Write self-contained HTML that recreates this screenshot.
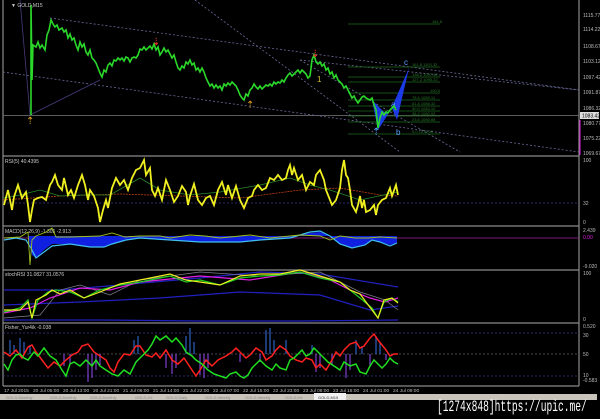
<!DOCTYPE html>
<html><head><meta charset="utf-8">
<style>
html,body{margin:0;padding:0;background:#000;width:600px;height:419px;overflow:hidden;font-family:"Liberation Sans",sans-serif}
svg{position:absolute;left:0;top:0}
.wm{position:absolute;left:437px;top:398px;color:#fff;font-family:"Liberation Mono",monospace;font-size:16px;white-space:nowrap;transform:scaleX(0.6);transform-origin:0 0}
</style></head><body>
<svg width="600" height="419" viewBox="0 0 600 419">
<rect width="600" height="419" fill="#000"/>
<g stroke="#8a8a8a" stroke-width="1.2" fill="none">
<line x1="3" y1="0" x2="3" y2="386"/>
<line x1="579" y1="0" x2="579" y2="386"/>
<line x1="3" y1="156" x2="579" y2="156"/>
<line x1="3" y1="226" x2="579" y2="226"/>
<line x1="3" y1="270" x2="579" y2="270"/>
<line x1="3" y1="323" x2="579" y2="323"/>
<line x1="3" y1="386" x2="579" y2="386"/>
</g>
<line x1="3" y1="115.5" x2="579" y2="115.5" stroke="#7a7a7a" stroke-width="0.8"/>
<g stroke="#6a6a9a" stroke-width="0.8" stroke-dasharray="2,2" fill="none">
<line x1="50" y1="18" x2="579" y2="90"/>
<line x1="3" y1="72" x2="579" y2="152"/>
<line x1="195" y1="0" x2="400" y2="152"/>
<line x1="300" y1="60" x2="460" y2="152"/>
<line x1="300" y1="60" x2="579" y2="90"/>
<line x1="30" y1="115" x2="100" y2="80" stroke-dasharray="none" stroke="#4a3a7a"/>
<line x1="20" y1="0" x2="30" y2="115" stroke-dasharray="none" stroke="#4a3a7a"/>
</g>
<g stroke="#1f6a1f" stroke-width="0.8">
<line x1="348" y1="24" x2="440" y2="24"/>
<line x1="348" y1="67" x2="440" y2="67"/>
<line x1="348" y1="77" x2="440" y2="77"/>
<line x1="348" y1="82" x2="440" y2="82"/>
<line x1="348" y1="93" x2="440" y2="93"/>
<line x1="348" y1="100" x2="440" y2="100"/>
<line x1="348" y1="106" x2="440" y2="106"/>
<line x1="348" y1="111" x2="440" y2="111"/>
<line x1="348" y1="116" x2="440" y2="116"/>
<line x1="348" y1="122" x2="440" y2="122"/>
<line x1="348" y1="134" x2="440" y2="134"/>
</g>
<g fill="#2a7a2a" font-size="4">
<text x="432" y="23">161.8</text>
<text x="412" y="66">161.8 1103.32</text>
<text x="412" y="76">138.2 1097.42</text>
<text x="412" y="81">127.2 1095.22</text>
<text x="430" y="92">100.0</text>
<text x="412" y="99">78.6 1089.11</text>
<text x="412" y="105">61.8 1086.32</text>
<text x="412" y="110">50.0 1084.10</text>
<text x="412" y="115">38.2 1082.92</text>
<text x="412" y="121">23.6 1080.88</text>
<text x="412" y="133">0.0 1075.30</text>
</g>
<polygon points="372,100 378,130 392,108 397,120 409,68 395,100 390,112 384,112" fill="#1f3fff" opacity="0.9"/>
<g fill="#5aa0ff" font-size="8"><text x="404" y="65">c</text><text x="391" y="107">a</text><text x="396" y="135">b</text></g>
<text x="317" y="82" fill="#d8c030" font-size="8">1</text>
<polyline fill="none" stroke="#2ad82a" stroke-width="1.6" points="31,115 31,5 32,80 33,45 36,47 38,42 40,48 42,45 45,50 47,35 49,30 51,20 53,24 55,27 57,25 59,30 62,28 64,32 66,30 68,38 70,34 72,40 74,38 76,45 78,50 80,42 82,47 84,44 86,52 88,55 90,50 92,58 94,60 96,63 98,68 100,73 102,77 104,70 106,72 108,65 110,63 112,66 114,60 116,61 118,58 120,60 122,58 124,61 126,57 128,58 130,62 132,58 134,57 136,58 138,55 140,49 142,50 144,47 146,50 148,48 150,46 152,49 154,44 156,50 158,47 160,55 162,52 164,48 166,52 168,50 170,54 172,58 174,55 176,62 178,68 180,70 182,66 184,68 186,62 188,64 190,60 192,65 194,63 196,70 198,68 200,72 202,68 204,72 206,78 208,82 210,86 212,84 214,88 216,85 218,88 220,86 222,90 224,84 226,86 228,83 230,85 232,82 234,84 236,86 238,90 240,95 242,98 244,100 246,94 248,96 250,90 252,88 254,84 256,87 258,89 260,86 262,89 264,87 266,85 268,86 270,84 272,86 274,82 276,84 278,82 280,83 282,80 284,82 286,78 288,75 290,73 292,76 294,74 296,72 298,70 300,73 302,70 304,72 306,74 308,78 310,76 312,60 314,55 316,62 318,64 320,62 322,66 324,64 326,70 328,68 330,74 332,72 334,78 336,75 338,80 340,82 342,84 344,88 346,86 348,90 350,94 352,98 354,96 356,100 358,103 360,100 362,97 364,96 366,98 368,99 370,100 372,98 374,105 376,110 378,128 380,118 382,112 384,115 386,112 388,113 390,110 392,108 394,106 396,110"/>
<g fill="#e0a020" font-size="10"><text x="26" y="124">⇡</text><text x="246" y="108">⇡</text><text x="372" y="135" fill="#5aa0ff">⇡</text></g>
<g fill="#ff3030" font-size="10"><text x="152" y="45">⇣</text><text x="311" y="57">⇣</text></g>
<g fill="#ccc" font-size="5"><text x="11" y="7">▼ GOLD,M15</text></g>
<g fill="#bbb" font-size="5">
<text x="583" y="17">1115.77</text><text x="583" y="31">1114.22</text><text x="583" y="48">1108.67</text>
<text x="583" y="63">1103.12</text><text x="583" y="79">1097.42</text><text x="583" y="94">1091.87</text>
<text x="583" y="110">1086.32</text><text x="583" y="125">1080.77</text><text x="583" y="140">1075.22</text><text x="583" y="155">1069.67</text>
</g>
<rect x="580" y="112" width="19" height="7" fill="#ddd"/><text x="582" y="117.5" font-size="5" fill="#000">1083.42</text>
<line x1="580" y1="120" x2="580" y2="155" stroke="#e020e0" stroke-width="1"/>
<line x1="3" y1="203" x2="579" y2="203" stroke="#3a3a8a" stroke-dasharray="2,2" stroke-width="0.8"/>
<text x="5" y="163" fill="#ccc" font-size="5">RSI(5) 40.4395</text>
<g fill="#bbb" font-size="5"><text x="583" y="162">100</text><text x="583" y="205">32</text><text x="583" y="224">0</text></g>
<polyline fill="none" stroke="#c04010" stroke-width="0.8" stroke-dasharray="2,1" points="3,200 60,196 120,194 180,196 240,198 300,190 340,188 380,195 398,196"/>
<polyline fill="none" stroke="#2a8a2a" stroke-width="0.8" points="3,198 20,195 40,190 60,196 80,195 110,195 140,178 160,190 190,195 220,192 260,185 290,178 310,185 330,190 360,200 398,192"/>
<polyline fill="none" stroke="#f0f020" stroke-width="1.8" points="4,205 8,190 12,210 14,197 18,185 22,198 26,192 28,205 30,222 32,210 34,200 38,198 42,197 46,200 50,185 52,182 55,175 58,185 62,190 64,178 68,195 71,190 74,198 78,185 82,175 85,185 88,200 90,190 94,196 98,208 100,222 103,210 106,200 108,208 112,188 116,178 120,185 124,180 128,190 132,178 136,170 140,168 144,160 146,175 150,168 152,190 155,196 158,188 162,200 166,180 170,190 174,202 178,196 182,186 186,192 188,205 190,196 194,184 198,200 202,205 206,198 210,196 214,205 218,190 222,182 226,195 228,185 232,198 236,186 240,200 244,208 248,198 252,196 254,190 258,185 262,190 266,188 270,178 274,180 278,175 282,180 286,178 288,170 290,165 292,175 294,168 298,180 302,175 306,190 310,182 314,185 316,175 320,170 324,180 326,190 330,200 332,205 336,200 340,188 342,170 344,160 346,175 348,178 350,190 352,205 356,212 358,205 360,196 362,208 364,200 366,212 370,210 374,205 376,215 378,205 382,200 386,198 390,188 392,196 396,185 398,195"/>
<text x="5" y="233" fill="#ccc" font-size="5">MACD(12,26,9) -1.305 -2.913</text>
<g fill="#bbb" font-size="5"><text x="583" y="232">2.439</text><text x="583" y="239" fill="#e020e0">0.00</text><text x="583" y="268">-9.020</text></g>
<line x1="3" y1="238" x2="579" y2="238" stroke="#a020a0" stroke-width="0.8"/>
<path fill="#1020e0" d="M4,236 L20,236 L28,236 L32,255 L36,258 L44,250 L52,244 L70,244 L90,247 L104,247 L112,244 L126,240 L140,238 L170,240 L200,242 L240,242 L260,240 L290,238 L310,233 L320,232 L330,236 L340,244 L352,248 L365,245 L372,240 L380,242 L390,245 L397,243 L397,236 Z"/>
<polyline fill="none" stroke="#40c0f0" stroke-width="1.2" points="4,240 16,238 26,240 32,250 36,258 44,252 52,246 70,244 90,247 104,247 112,244 126,240 140,238 170,240 200,242 240,242 260,240 290,238 310,232 320,231 330,236 340,244 352,248 365,245 372,240 380,242 390,246 397,243"/>
<polyline fill="none" stroke="#a0c020" stroke-width="0.9" points="4,238 20,237 28,232 30,265 32,240 36,236 46,232 52,228 56,237 70,237 100,236 112,233 125,237 140,236 160,236 170,238 190,235 205,236 220,238 250,235 270,238 300,235 320,236 330,240 340,236 355,238 368,238 380,237 397,238"/>
<text x="5" y="276" fill="#ccc" font-size="5">stochRSI 31.0827 31.0576</text>
<g fill="#bbb" font-size="5"><text x="583" y="275">100</text><text x="583" y="321">0</text></g>
<polyline fill="none" stroke="#2020c0" stroke-width="1.2" points="4,290 60,290 120,285 200,278 260,272 320,274 398,287"/>
<polyline fill="none" stroke="#2020c0" stroke-width="1.2" points="4,305 80,302 160,298 240,292 320,295 370,310 398,306"/>
<polyline fill="none" stroke="#2020c0" stroke-width="1.2" points="4,320 100,320 200,321 300,321 398,320"/>
<polyline fill="none" stroke="#808090" stroke-width="0.7" points="4,318 40,315 60,290 80,285 110,295 140,280 200,272 260,276 320,272 360,292 385,300 398,310"/>
<polyline fill="none" stroke="#e020e0" stroke-width="1.2" points="4,313 30,308 50,298 80,288 110,290 140,282 200,276 250,280 300,272 330,280 350,290 370,298 385,302 398,298"/>
<polyline fill="none" stroke="#20d020" stroke-width="1.2" points="4,312 20,308 28,300 32,318 38,300 48,292 56,290 70,292 84,298 100,290 120,285 140,282 170,276 186,282 200,280 220,285 240,278 260,276 280,275 300,272 320,278 340,282 360,298 372,308 378,318 384,302 392,298 398,302"/>
<polyline fill="none" stroke="#f0f020" stroke-width="1.2" points="4,310 20,310 28,302 32,318 36,300 46,295 52,290 60,294 70,290 84,298 100,292 120,284 140,280 170,274 186,280 200,282 220,285 240,276 260,274 280,274 300,270 320,276 340,282 350,290 360,294 372,310 378,318 384,300 392,298 398,303"/>
<text x="5" y="329" fill="#ccc" font-size="5">Fisher_Yur4ik -0.038</text>
<g fill="#bbb" font-size="5"><text x="583" y="328">0.520</text><text x="583" y="337">30</text><text x="583" y="356">50</text><text x="583" y="377">10</text><text x="583" y="382">-0.583</text></g>
<g stroke="#3a3a8a" stroke-dasharray="2,2" stroke-width="0.7"><line x1="3" y1="333" x2="579" y2="333"/><line x1="3" y1="376" x2="579" y2="376"/></g>
<line x1="3" y1="354" x2="579" y2="354" stroke="#606060" stroke-dasharray="2,2" stroke-width="0.7"/>
<g stroke="#3060c0" stroke-width="1.2">
<line x1="10" y1="354" x2="10" y2="340"/><line x1="14" y1="354" x2="14" y2="345"/><line x1="20" y1="354" x2="20" y2="338"/><line x1="24" y1="354" x2="24" y2="342"/><line x1="30" y1="354" x2="30" y2="345"/>
<line x1="134" y1="354" x2="134" y2="340"/><line x1="138" y1="354" x2="138" y2="336"/><line x1="186" y1="354" x2="186" y2="336"/><line x1="190" y1="354" x2="190" y2="328"/><line x1="194" y1="354" x2="194" y2="342"/>
<line x1="266" y1="354" x2="266" y2="330"/><line x1="270" y1="354" x2="270" y2="328"/><line x1="274" y1="354" x2="274" y2="340"/><line x1="286" y1="354" x2="286" y2="340"/>
<line x1="312" y1="354" x2="312" y2="345"/><line x1="356" y1="354" x2="356" y2="340"/><line x1="362" y1="354" x2="362" y2="346"/><line x1="376" y1="354" x2="376" y2="336"/><line x1="380" y1="354" x2="380" y2="343"/>
</g>
<g stroke="#8040d0" stroke-width="1.2">
<line x1="64" y1="354" x2="64" y2="366"/><line x1="70" y1="354" x2="70" y2="364"/><line x1="88" y1="354" x2="88" y2="382"/><line x1="92" y1="354" x2="92" y2="378"/><line x1="96" y1="354" x2="96" y2="370"/><line x1="100" y1="354" x2="100" y2="365"/>
<line x1="166" y1="354" x2="166" y2="368"/><line x1="172" y1="354" x2="172" y2="374"/><line x1="176" y1="354" x2="176" y2="368"/><line x1="200" y1="354" x2="200" y2="375"/><line x1="204" y1="354" x2="204" y2="378"/><line x1="208" y1="354" x2="208" y2="368"/>
<line x1="240" y1="354" x2="240" y2="362"/><line x1="260" y1="354" x2="260" y2="362"/><line x1="316" y1="354" x2="316" y2="372"/><line x1="320" y1="354" x2="320" y2="368"/><line x1="332" y1="354" x2="332" y2="365"/><line x1="346" y1="354" x2="346" y2="378"/><line x1="350" y1="354" x2="350" y2="370"/><line x1="370" y1="354" x2="370" y2="365"/><line x1="386" y1="354" x2="386" y2="360"/>
</g>
<polyline fill="none" stroke="#ff2020" stroke-width="1.5" points="4,352 10,356 16,350 22,358 28,347 32,345 36,352 42,360 48,368 54,362 60,366 66,360 72,355 78,352 82,346 88,344 94,352 100,356 106,360 110,368 114,372 118,362 124,354 130,355 136,346 140,346 146,355 152,357 156,353 160,358 166,350 172,360 178,364 184,358 190,367 196,376 200,370 206,360 212,366 218,360 226,356 232,352 236,348 240,352 246,358 250,355 256,348 262,352 266,360 272,356 276,350 280,346 286,350 290,356 296,360 302,362 306,358 312,360 316,368 320,364 326,370 332,360 336,352 340,356 344,350 350,344 356,342 360,348 364,346 370,338 374,334 378,340 382,345 386,350 390,356 394,354 398,354"/>
<polyline fill="none" stroke="#20e020" stroke-width="1.5" points="4,364 8,370 12,360 16,355 20,354 24,358 28,360 34,352 38,356 44,348 50,356 56,360 62,370 66,376 70,364 74,362 80,366 86,360 92,366 96,360 100,366 106,370 112,374 118,376 124,370 130,374 136,362 142,356 148,350 152,344 156,336 160,340 166,336 172,342 176,338 182,345 186,352 192,356 196,360 202,364 208,370 214,374 220,376 226,378 230,374 236,372 240,376 244,378 248,375 252,368 256,364 260,360 266,366 272,370 276,364 280,368 286,370 290,360 294,358 298,354 302,350 306,356 310,354 314,348 318,352 322,356 328,362 334,366 340,370 344,362 350,366 356,364 360,372 366,374 370,366 374,360 378,364 382,368 386,364 390,358 394,362 398,364"/>
<g fill="#bbb" font-size="4.8">
<text x="4" y="392">17 Jul 2015</text><text x="33" y="392">20 Jul 05:00</text><text x="63" y="392">20 Jul 13:00</text><text x="93" y="392">20 Jul 21:00</text><text x="123" y="392">21 Jul 06:00</text><text x="153" y="392">21 Jul 14:00</text><text x="183" y="392">21 Jul 22:00</text><text x="213" y="392">22 Jul 07:00</text><text x="243" y="392">22 Jul 15:00</text><text x="273" y="392">22 Jul 23:00</text><text x="303" y="392">23 Jul 08:00</text><text x="333" y="392">23 Jul 16:00</text><text x="363" y="392">24 Jul 01:00</text><text x="393" y="392">24 Jul 09:00</text>
</g>
<rect x="0" y="394" width="597" height="6" fill="#c8c4bc"/>
<rect x="314" y="393" width="32" height="7" fill="#f0f0f0"/>
<g fill="#888" font-size="4"><text x="6" y="399">GOLD,Monthly</text><text x="50" y="399">GOLD,Monthly</text><text x="90" y="399">GOLD,Monthly</text><text x="135" y="399">GOLD,H4</text><text x="166" y="399">GOLD,Daily</text><text x="205" y="399">GOLD,Weekly</text><text x="245" y="399">GOLD,Weekly</text><text x="285" y="399">GOLD,H4</text><text x="318" y="399" fill="#333">GOLD,M15</text></g>
</svg>
<div class="wm">[1274x848]https://upic.me/</div>
</body></html>
